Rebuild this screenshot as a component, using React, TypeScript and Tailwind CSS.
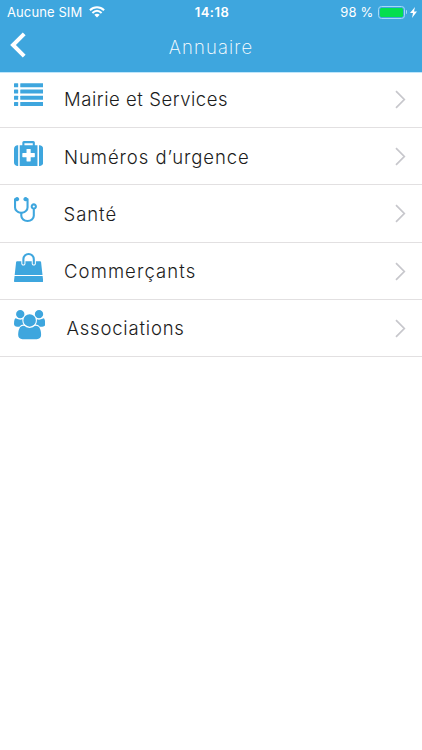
import React from "react";

type Item = { label: string; icon: React.ReactNode; text: string };

const glyph = "block h-[29.2px] w-auto fill-[#3ea6de]";

const ListIcon = () => (
  <svg viewBox="0 0 1792 1792" className={glyph}>
    {[192, 576, 960, 1344].map((y) => (
      <g key={y}>
        <rect x="0" y={y} width="256" height="256" rx="32" />
        <rect x="384" y={y} width="1408" height="256" rx="32" />
      </g>
    ))}
  </svg>
);

const MedkitIcon = () => (
  <svg viewBox="0 0 1792 1792" className={glyph}>
    <path d="M1280 1088v-192q0-14-9-23t-23-9h-224v-224q0-14-9-23t-23-9h-192q-14 0-23 9t-9 23v224h-224q-14 0-23 9t-9 23v192q0 14 9 23t23 9h224v224q0 14 9 23t23 9h192q14 0 23-9t9-23v-224h224q14 0 23-9t9-23zm-640-704h512v-128h-512v128zm-384 0v1280h-32q-92 0-158-66t-66-158v-832q0-92 66-158t158-66h32zm1184 0v1280h-1088v-1280h160v-160q0-40 28-68t68-28h576q40 0 68 28t28 68v160h160zm352 224v832q0 92-66 158t-158 66h-32v-1280h32q92 0 158 66t66 158z" />
  </svg>
);

const StethoscopeIcon = () => (
  <svg viewBox="64 0 1408 1792" className={glyph}>
    <path d="M1344 640q0-26-19-45t-45-19-45 19-19 45 19 45 45 19 45-19 19-45zm128 0q0 62-35.5 111t-92.5 70v395q0 159-131.5 271.5t-316.5 112.5-316.5-112.5-131.5-271.5v-132q-164-20-274-128t-110-252v-512q0-26 19-45t45-19q6 0 16 2 17-30 47-48t65-18q53 0 90.5 37.5t37.5 90.5-37.5 90.5-90.5 37.5q-33 0-64-18v402q0 106 94 181t226 75 226-75 94-181v-402q-31 18-64 18-53 0-90.5-37.5t-37.5-90.5 37.5-90.5 90.5-37.5q35 0 65 18t47 48q10-2 16-2 26 0 45 19t19 45v512q0 144-110 252t-274 128v132q0 106 94 181t226 75 226-75 94-181v-395q-57-21-92.5-70t-35.5-111q0-80 56-136t136-56 136 56 56 136z" />
  </svg>
);

const BagIcon = () => (
  <svg viewBox="0 0 1792 1792" className={glyph}>
    <path d="M1757 1408l35 313q3 28-16 50-19 21-48 21h-1664q-29 0-48-21-19-22-16-50l35-313h1722zm-93-839l86 775h-1708l86-775q3-24 21-40.5t43-16.5h256v128q0 53 37.5 90.5t90.5 37.5 90.5-37.5 37.5-90.5v-128h384v128q0 53 37.5 90.5t90.5 37.5 90.5-37.5 37.5-90.5v-128h256q25 0 43 16.5t21 40.5zm-384-185v256q0 26-19 45t-45 19-45-19-19-45v-256q0-106-75-181t-181-75-181 75-75 181v256q0 26-19 45t-45 19-45-19-19-45v-256q0-159 112.5-271.5t271.5-112.5 271.5 112.5 112.5 271.5z" />
  </svg>
);

const UsersIcon = () => (
  <svg viewBox="0 0 1920 1792" className={glyph}>
    <path d="M593 896q-162 5-265 128h-134q-82 0-138-40.5t-56-118.5q0-353 124-353 6 0 43.5 21t97.5 42.5 119 21.5q67 0 133-23-5 37-5 66 0 139 81 256zm1071 637q0 120-73 189.5t-194 69.5h-874q-121 0-194-69.5t-73-189.5q0-53 3.5-103.5t14-109 26.5-108.5 43-97.5 62-81 85.5-53.5 111.5-20q10 0 43 21.5t73 48 107 48 135 21.5 135-21.5 107-48 73-48 43-21.5q61 0 111.5 20t85.5 53.5 62 81 43 97.5 26.5 108.5 14 109 3.5 103.5zm-1024-1277q0 106-75 181t-181 75-181-75-75-181 75-181 181-75 181 75 75 181zm704 384q0 159-112.5 271.5t-271.5 112.5-271.5-112.5-112.5-271.5 112.5-271.5 271.5-112.5 271.5 112.5 112.5 271.5zm576 225q0 78-56 118.5t-138 40.5h-134q-103-123-265-128 81-117 81-256 0-29-5-66 66 23 133 23 59 0 119-21.5t97.5-42.5 43.5-21q124 0 124 353zm-128-609q0 106-75 181t-181 75-181-75-75-181 75-181 181-75 181 75 75 181z" />
  </svg>
);

const items: Item[] = [
  { label: "Mairie et Services", icon: <ListIcon />, text: "ml-[50px] tracking-[0.55px]" },
  { label: "Numéros d’urgence", icon: <MedkitIcon />, text: "ml-[50px] tracking-[0.94px]" },
  { label: "Santé", icon: <StethoscopeIcon />, text: "ml-[49.5px] tracking-[0.95px]" },
  { label: "Commerçants", icon: <BagIcon />, text: "ml-[50px] tracking-[1.1px]" },
  { label: "Associations", icon: <UsersIcon />, text: "ml-[52.5px] tracking-[0.8px]" },
];

const StatusBar = () => (
  <div className="grid h-6 grid-cols-3 items-center pl-[7px] pr-[5px] text-[13px] leading-6">
    <div className="flex items-center gap-[7px]">
      <span className="whitespace-nowrap tracking-[0.1px]">Aucune SIM</span>
      <svg viewBox="0 0 16 12" className="h-3 w-4" fill="none" stroke="white" strokeWidth="2">
        <path d="M.9 4.2C5 .2 11 .2 15.1 4.2M3.4 7C6.2 4.3 9.8 4.3 12.6 7" />
        <path d="M5.3 8.8Q8 6.5 10.7 8.8L8 11.5Z" fill="white" stroke="none" />
      </svg>
    </div>
    <span className="text-center font-semibold tracking-[0.45px]">14:18</span>
    <div className="flex items-center justify-end">
      <span className="whitespace-nowrap tracking-[0.2px]">98 %</span>
      <div className="ml-[4px] h-[13px] w-[27px] rounded-[3.5px] border border-[#a5daf7] p-[1px]">
        <div className="h-full rounded-[1.5px] bg-[#04de50]" />
      </div>
      <div className="ml-px h-1 w-[1.5px] rounded-r bg-[#a5daf7]" />
      <svg viewBox="0 0 7 11" className="ml-[3px] h-[11px] w-[7px] fill-white">
        <path d="M5 0L0 6h3L2 11l5-6.5H4Z" />
      </svg>
    </div>
  </div>
);

export default function App() {
  return (
    <div className="h-[750px] w-[422px] overflow-hidden bg-white font-['Inter',sans-serif]">
      <header className="h-[73px] border-b border-[#bfe6fb] bg-[#3ea6de] text-white">
        <StatusBar />
        <div className="grid h-12 grid-cols-3 items-center px-2.5">
          <svg viewBox="0 0 16 26" className="-mt-[7px] h-[26px] w-4" fill="none" stroke="white" strokeWidth="4">
            <path d="M14.2 1.8L3 13l11.2 11.2" />
          </svg>
          <h1 className="-mt-px text-center text-[18.5px] font-extralight tracking-[1.15px]">Annuaire</h1>
        </div>
      </header>
      <ul>
        {items.map((item, i) => (
          <li
            key={item.label}
            className={`flex border-b border-[#e2e0e1] pl-3.5 pr-4 ${i === 0 ? "h-[55px] pb-[1.5px]" : "h-[57.25px] pt-[1.2px]"}`}
          >
            <div className={`h-full w-0 ${i === 0 ? "pt-[7px]" : "pt-[9.4px]"}`}>
              <div className="w-8">{item.icon}</div>
            </div>
            <span
              className={`flex-1 self-center text-[18.5px] font-[270] leading-6 text-[#1c1c1c] ${item.text}`}
            >
              {item.label}
            </span>
            <svg viewBox="0 0 11 19" className="h-[19px] w-[11px] self-center" fill="none" stroke="#c7c7cc" strokeWidth="1.7">
              <path d="M1 1.2l8.3 8.3L1 17.8" />
            </svg>
          </li>
        ))}
      </ul>
    </div>
  );
}
